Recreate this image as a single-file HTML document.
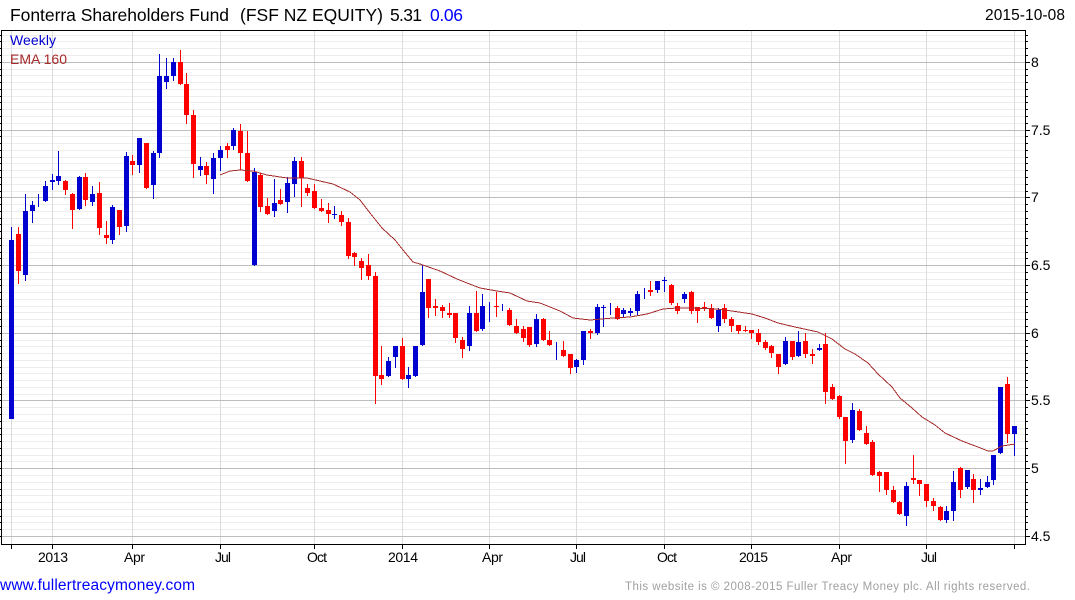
<!DOCTYPE html>
<html><head><meta charset="utf-8"><title>Fonterra Shareholders Fund</title>
<style>
html,body{margin:0;padding:0;background:#fff;width:1075px;height:600px;overflow:hidden}
svg{display:block}
text{font-family:"Liberation Sans",Arial,sans-serif}
</style></head><body>
<svg width="1075" height="600" viewBox="0 0 1075 600" xmlns="http://www.w3.org/2000/svg">
<g shape-rendering="crispEdges" fill="none">
<path stroke="#ededed" stroke-width="1" d="M2 35.5H1025M2 41.5H1025M2 48.5H1025M2 55.5H1025M2 69.5H1025M2 75.5H1025M2 82.5H1025M2 89.5H1025M2 96.5H1025M2 102.5H1025M2 109.5H1025M2 116.5H1025M2 123.5H1025M2 136.5H1025M2 143.5H1025M2 150.5H1025M2 157.5H1025M2 163.5H1025M2 170.5H1025M2 177.5H1025M2 184.5H1025M2 191.5H1025M2 204.5H1025M2 211.5H1025M2 218.5H1025M2 224.5H1025M2 231.5H1025M2 238.5H1025M2 245.5H1025M2 252.5H1025M2 258.5H1025M2 272.5H1025M2 279.5H1025M2 285.5H1025M2 292.5H1025M2 299.5H1025M2 306.5H1025M2 312.5H1025M2 319.5H1025M2 326.5H1025M2 340.5H1025M2 346.5H1025M2 353.5H1025M2 360.5H1025M2 367.5H1025M2 373.5H1025M2 380.5H1025M2 387.5H1025M2 394.5H1025M2 407.5H1025M2 414.5H1025M2 421.5H1025M2 428.5H1025M2 434.5H1025M2 441.5H1025M2 448.5H1025M2 455.5H1025M2 461.5H1025M2 475.5H1025M2 482.5H1025M2 489.5H1025M2 495.5H1025M2 502.5H1025M2 509.5H1025M2 516.5H1025M2 522.5H1025M2 529.5H1025"/>
<path stroke="#dcdcdc" stroke-width="1" d="M11.5 31V544M52.5 31V544M132.5 31V544M220.5 31V544M314.5 31V544M402.5 31V544M489.5 31V544M576.5 31V544M664.5 31V544M751.5 31V544M839.5 31V544M926.5 31V544M1014.5 31V544"/>
<path stroke="#bdbdbd" stroke-width="1" d="M2 62.5H1025M2 130.5H1025M2 197.5H1025M2 265.5H1025M2 333.5H1025M2 400.5H1025M2 468.5H1025M2 536.5H1025"/>
<!-- blue candles -->
<path stroke="#0000d0" stroke-width="1" d="M11.5 227V419M25.5 194V281M32.5 201V223M38.5 194V207M45.5 181V202M52.5 174V190M58.5 151V185M79.5 176V210M92.5 186V206M112.5 205V244M126.5 152V232M139.5 138V173M153.5 151V199M159.5 54V158M166.5 58V89M173.5 58V81M200.5 157V176M213.5 153V194M220.5 146V171M233.5 128V150M254.5 168V266M274.5 179V217M287.5 177V213M294.5 157V197M334.5 206V219M388.5 357V377M395.5 346V368M408.5 367V388M415.5 346V377M422.5 265V346M469.5 306V351M482.5 294V331M489.5 302V322M502.5 304V311M536.5 314V347M556.5 342V360M576.5 359V373M583.5 331V365M597.5 304V335M603.5 305V327M610.5 303V315M623.5 308V317M630.5 308V316M637.5 291V315M644.5 288V299M657.5 281V293M664.5 277V292M684.5 292V303M718.5 308V332M785.5 337V365M798.5 331V357M819.5 344V351M852.5 403V443M906.5 482V526M946.5 506V523M953.5 471V521M967.5 470V489M980.5 479V495M987.5 476V488M993.5 455V485M1000.5 387V454M1014.5 426V456"/>
<path stroke="#0000d0" stroke-width="5" d="M11.5 240V419M25.5 211V275M32.5 205V211M45.5 186V201M52.5 180V182M58.5 176V181M79.5 177V209M92.5 194V202M112.5 207V240M126.5 156V226M139.5 138V165M153.5 153V185M159.5 76V153M166.5 76V82M173.5 62V76M200.5 166V170M213.5 158V179M220.5 150V158M233.5 130V146M254.5 172V265M274.5 203V211M287.5 183V202M294.5 161V184M334.5 214V215M388.5 361V376M395.5 346V357M408.5 375V379M415.5 346V376M422.5 292V345M469.5 313V346M482.5 306V329M536.5 319V344M576.5 360V367M583.5 331V360M597.5 307V333M603.5 307V308M623.5 310V314M630.5 311V313M637.5 294V311M657.5 281V290M664.5 280V281M684.5 294V299M718.5 310V326M785.5 341V364M798.5 342V356M819.5 348V350M852.5 410V440M906.5 486V516M946.5 511V520M953.5 482V511M967.5 470V487M980.5 488V490M987.5 482V487M993.5 455V480M1000.5 387V453M1014.5 426V434"/>
<!-- red candles -->
<path stroke="#ff0000" stroke-width="1" d="M18.5 227V284M65.5 180V195M72.5 193V229M85.5 173V206M99.5 182V235M106.5 221V244M119.5 210V235M132.5 155V175M146.5 143V189M180.5 50V85M186.5 73V124M193.5 110V178M206.5 162V184M227.5 143V158M240.5 124V170M247.5 131V182M260.5 173V212M267.5 198V215M280.5 189V205M301.5 157V207M307.5 184V196M314.5 184V209M321.5 199V212M328.5 203V223M341.5 211V226M348.5 218V259M354.5 252V266M361.5 258V280M368.5 254V280M375.5 272V404M381.5 346V385M402.5 338V380M428.5 279V318M435.5 299V316M442.5 305V318M449.5 303V318M455.5 313V343M462.5 337V358M476.5 291V332M496.5 292V317M509.5 308V326M516.5 319V334M523.5 326V342M529.5 327V347M543.5 318V341M549.5 331V346M563.5 341V357M570.5 354V374M590.5 329V339M617.5 306V320M650.5 281V296M671.5 284V305M677.5 303V314M691.5 291V314M697.5 307V323M704.5 302V311M711.5 304V319M724.5 304V323M731.5 317V332M738.5 325V334M745.5 326V332M751.5 330V339M758.5 329V345M765.5 340V350M771.5 345V358M778.5 354V374M792.5 341V360M805.5 333V358M812.5 349V364M825.5 333V404M832.5 384V400M839.5 395V419M845.5 417V464M859.5 409V431M866.5 426V445M872.5 440V476M879.5 471V492M886.5 472V495M893.5 486V503M899.5 501V515M913.5 455V484M919.5 480V496M926.5 484V507M933.5 498V511M940.5 506V521M960.5 467V498M973.5 474V503M1007.5 377V443"/>
<path stroke="#ff0000" stroke-width="5" d="M18.5 234V271M65.5 181V190M72.5 194V210M85.5 177V200M99.5 193V228M106.5 235V238M119.5 210V227M132.5 161V165M146.5 143V188M180.5 62V84M186.5 84V115M193.5 115V164M206.5 166V175M227.5 146V150M240.5 131V153M247.5 153V181M260.5 175V207M267.5 206V214M280.5 200V204M301.5 161V178M307.5 188V193M314.5 191V208M321.5 208V211M328.5 210V214M341.5 215V222M348.5 222V256M354.5 253V257M361.5 261V268M368.5 265V276M375.5 276V376M381.5 375V379M402.5 346V379M428.5 279V308M435.5 306V308M442.5 307V311M449.5 313V315M455.5 313V338M462.5 340V349M476.5 313V331M496.5 306V307M509.5 310V325M516.5 326V333M523.5 329V338M529.5 327V345M543.5 319V340M549.5 340V345M563.5 350V356M570.5 354V368M590.5 331V333M617.5 308V319M650.5 290V292M671.5 285V303M677.5 306V311M691.5 292V311M697.5 307V311M704.5 307V308M711.5 308V318M724.5 308V319M731.5 319V326M738.5 325V331M745.5 330V331M751.5 330V333M758.5 333V342M765.5 342V348M771.5 346V353M778.5 354V367M792.5 341V357M805.5 341V354M812.5 354V356M825.5 344V392M832.5 387V399M839.5 396V417M845.5 417V441M859.5 411V430M866.5 433V444M872.5 442V475M879.5 472V476M886.5 472V490M893.5 490V502M899.5 502V514M913.5 478V480M919.5 480V484M926.5 484V501M933.5 501V506M940.5 507V520M960.5 468V490M973.5 479V490M1007.5 384V434"/>
<!-- EMA -->
<polyline stroke="#a52a2a" stroke-width="1" points="220,175 230,171 240,170 253,171 267,175 287,178 307,178 320,181 333,184 350,192 360,200 370,213 382,228 395,240 403,250 413,262 420,264 440,271 457,279 467,283 480,288 497,291 510,293 527,301 540,303 560,311 573,318 590,320 613,318 630,317 647,314 663,309 677,308 693,308 717,309 732,311 752,314 765,318 778,323 795,327 818,332 832,339 845,349 855,354 868,363 878,374 892,387 900,398 912,408 922,417 935,425 945,433 962,441 978,447 988,451 993,451 1002,446 1015,444"/>
<!-- frame -->
<path stroke="#000" stroke-width="1" d="M1 30.5H1025.5M1 544.5H1025.5M1.5 30V545M1025.5 30V545"/>
<path stroke="#000" stroke-width="1" d="M0 35.5H1M0 41.5H1M0 48.5H1M0 55.5H1M0 62.5H1M0 69.5H1M0 75.5H1M0 82.5H1M0 89.5H1M0 96.5H1M0 102.5H1M0 109.5H1M0 116.5H1M0 123.5H1M0 130.5H1M0 136.5H1M0 143.5H1M0 150.5H1M0 157.5H1M0 163.5H1M0 170.5H1M0 177.5H1M0 184.5H1M0 191.5H1M0 197.5H1M0 204.5H1M0 211.5H1M0 218.5H1M0 224.5H1M0 231.5H1M0 238.5H1M0 245.5H1M0 252.5H1M0 258.5H1M0 265.5H1M0 272.5H1M0 279.5H1M0 285.5H1M0 292.5H1M0 299.5H1M0 306.5H1M0 312.5H1M0 319.5H1M0 326.5H1M0 333.5H1M0 340.5H1M0 346.5H1M0 353.5H1M0 360.5H1M0 367.5H1M0 373.5H1M0 380.5H1M0 387.5H1M0 394.5H1M0 400.5H1M0 407.5H1M0 414.5H1M0 421.5H1M0 428.5H1M0 434.5H1M0 441.5H1M0 448.5H1M0 455.5H1M0 461.5H1M0 468.5H1M0 475.5H1M0 482.5H1M0 489.5H1M0 495.5H1M0 502.5H1M0 509.5H1M0 516.5H1M0 522.5H1M0 529.5H1M0 536.5H1"/>
<path stroke="#000" stroke-width="1" d="M1026 35.5H1028M1026 41.5H1028M1026 48.5H1028M1026 55.5H1028M1026 69.5H1028M1026 75.5H1028M1026 82.5H1028M1026 89.5H1028M1026 96.5H1028M1026 102.5H1028M1026 109.5H1028M1026 116.5H1028M1026 123.5H1028M1026 136.5H1028M1026 143.5H1028M1026 150.5H1028M1026 157.5H1028M1026 163.5H1028M1026 170.5H1028M1026 177.5H1028M1026 184.5H1028M1026 191.5H1028M1026 204.5H1028M1026 211.5H1028M1026 218.5H1028M1026 224.5H1028M1026 231.5H1028M1026 238.5H1028M1026 245.5H1028M1026 252.5H1028M1026 258.5H1028M1026 272.5H1028M1026 279.5H1028M1026 285.5H1028M1026 292.5H1028M1026 299.5H1028M1026 306.5H1028M1026 312.5H1028M1026 319.5H1028M1026 326.5H1028M1026 340.5H1028M1026 346.5H1028M1026 353.5H1028M1026 360.5H1028M1026 367.5H1028M1026 373.5H1028M1026 380.5H1028M1026 387.5H1028M1026 394.5H1028M1026 407.5H1028M1026 414.5H1028M1026 421.5H1028M1026 428.5H1028M1026 434.5H1028M1026 441.5H1028M1026 448.5H1028M1026 455.5H1028M1026 461.5H1028M1026 475.5H1028M1026 482.5H1028M1026 489.5H1028M1026 495.5H1028M1026 502.5H1028M1026 509.5H1028M1026 516.5H1028M1026 522.5H1028M1026 529.5H1028M1026 62.5H1030M1026 130.5H1030M1026 197.5H1030M1026 265.5H1030M1026 333.5H1030M1026 400.5H1030M1026 468.5H1030M1026 536.5H1030"/>
<path stroke="#000" stroke-width="1" d="M11.5 545V549M52.5 545V549M132.5 545V549M220.5 545V549M314.5 545V549M402.5 545V549M489.5 545V549M576.5 545V549M664.5 545V549M751.5 545V549M839.5 545V549M926.5 545V549M1014.5 545V549"/>
</g>
<!-- title -->
<text x="10" y="21" font-size="17.5" fill="#000" textLength="219" lengthAdjust="spacing">Fonterra Shareholders Fund</text>
<text x="240" y="21" font-size="17.5" fill="#000" textLength="143" lengthAdjust="spacing">(FSF NZ EQUITY)</text>
<text x="390" y="21" font-size="17.5" fill="#000" textLength="32" lengthAdjust="spacing">5.31</text>
<text x="430" y="21" font-size="17.5" fill="#0000ff" textLength="33" lengthAdjust="spacing">0.06</text>
<text x="985" y="20" font-size="15.5" fill="#000" textLength="80" lengthAdjust="spacing">2015-10-08</text>
<text x="10" y="45" font-size="14" fill="#0000d0" textLength="46" lengthAdjust="spacing">Weekly</text>
<text x="10" y="64" font-size="14" fill="#a52a2a" textLength="57" lengthAdjust="spacing">EMA 160</text>
<!-- y labels -->
<g font-size="14" fill="#000">
<text x="1031" y="67">8</text>
<text x="1031" y="135">7.5</text>
<text x="1031" y="202">7</text>
<text x="1031" y="270">6.5</text>
<text x="1031" y="338">6</text>
<text x="1031" y="405">5.5</text>
<text x="1031" y="473">5</text>
<text x="1031" y="541">4.5</text>
<!-- x labels -->
<text x="38" y="562" textLength="30" lengthAdjust="spacing">2013</text>
<text x="124" y="562" textLength="21" lengthAdjust="spacing">Apr</text>
<text x="215" y="562" textLength="16" lengthAdjust="spacing">Jul</text>
<text x="307" y="562" textLength="20" lengthAdjust="spacing">Oct</text>
<text x="388" y="562" textLength="30" lengthAdjust="spacing">2014</text>
<text x="482" y="562" textLength="21" lengthAdjust="spacing">Apr</text>
<text x="570" y="562" textLength="16" lengthAdjust="spacing">Jul</text>
<text x="657" y="562" textLength="20" lengthAdjust="spacing">Oct</text>
<text x="739" y="562" textLength="29" lengthAdjust="spacing">2015</text>
<text x="831" y="562" textLength="21" lengthAdjust="spacing">Apr</text>
<text x="921" y="562" textLength="16" lengthAdjust="spacing">Jul</text>
</g>
<!-- footer -->
<text x="0" y="590" font-size="15.5" fill="#0000ff" textLength="195" lengthAdjust="spacing">www.fullertreacymoney.com</text>
<text x="625" y="590" font-size="11.5" fill="#a0a0a0" textLength="405" lengthAdjust="spacing">This website is © 2008-2015 Fuller Treacy Money plc. All rights reserved.</text>
</svg>
</body></html>
